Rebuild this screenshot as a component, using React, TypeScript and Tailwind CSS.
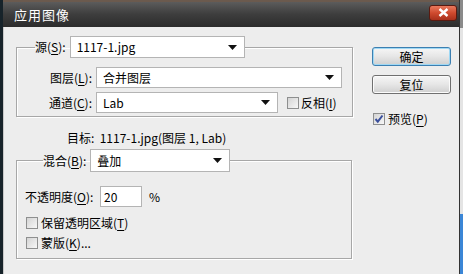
import { ReactNode } from "react";

const FONT = { fontFamily: '"Noto Sans CJK SC", "Liberation Sans", sans-serif' };

const Key = ({ children }: { children: ReactNode }) => (
  <span className="underline underline-offset-2">{children}</span>
);

const Select = ({ value, className }: { value: string; className: string }) => (
  <div
    className={`flex items-center justify-between bg-white border border-[#b4b4b4] pl-[6px] pr-[7px] text-[12px] text-black ${className}`}
  >
    <span>{value}</span>
    <svg width="9" height="5" viewBox="0 0 9 5">
      <path d="M0 0h9L4.5 5z" fill="#111" />
    </svg>
  </div>
);

const Check = ({ checked = false }: { checked?: boolean }) => (
  <span className="relative w-[12px] h-[12px] shrink-0 border border-[#8e8f8f] bg-gradient-to-br from-[#d4d4d4] to-[#f7f7f7]">
    {checked && (
      <svg className="absolute left-0 top-0" width="10" height="10" viewBox="0 0 10 10">
        <path d="M1.5 5l2.3 2.6L8.5 1.5" stroke="#3a4f9c" strokeWidth="2" fill="none" />
      </svg>
    )}
  </span>
);

const Button = ({ label, primary = false }: { label: string; primary?: boolean }) => (
  <button
    className={`w-[79px] h-[19px] rounded-[3px] border text-[12px] leading-none text-black bg-gradient-to-b from-[#f6f6f6] via-[#e6e6e6] to-[#cfcfcf] ${
      primary ? "border-[#3c7fb1] shadow-[inset_0_0_0_1px_#9fd8f4]" : "border-[#707070] shadow-[inset_0_0_0_1px_#fbfbfb]"
    }`}
  >
    {label}
  </button>
);

export default function App() {
  return (
    <div className="w-[463px] h-[274px] flex bg-[#dcdcdc] overflow-hidden" style={FONT}>
      <div className="w-[460px] h-full flex flex-col border-l-[3px] border-[#17232a] border-r border-r-[#333]">
        {/* title bar */}
        <div className="h-[27px] shrink-0 flex items-center justify-between pl-[11px] pr-[2px] bg-gradient-to-b from-[#5c5c5c] via-[#3d3d3d] to-[#2c2c2c] border-t-[2px] border-[#6b5a4e]">
          <span className="text-white text-[13px] tracking-[1px]">应用图像</span>
          <span className="w-[28px] h-[16px] mb-[4px] flex items-center justify-center rounded-[3px] border border-[#5a1a10] bg-gradient-to-b from-[#e8785c] via-[#cf4a2e] to-[#a8301b]">
            <svg width="11" height="9" viewBox="0 0 11 9">
              <path d="M1.5 1l8 7M9.5 1l-8 7" stroke="#fff" strokeWidth="2.4" />
            </svg>
          </span>
        </div>

        {/* body */}
        <div className="flex-1 flex bg-[#ededed] border-l border-[#c8c8c8] pl-[12px] text-[12px] text-black">
          <div className="w-[337px] flex flex-col pt-[9px]">
            <fieldset className="border border-[#a7a7a7] shadow-[inset_1px_1px_0_#fff,1px_1px_0_#fff] pt-[9px] pb-[3px]">
              <legend className="ml-[18px] flex items-center gap-[4px] h-[22px]">
                <span>
                  源(<Key>S</Key>):
                </span>
                <Select value="1117-1.jpg" className="w-[175px] h-[22px]" />
              </legend>
              <div className="flex flex-col gap-[4px]">
                <div className="flex items-center">
                  <span className="w-[79px] text-right pr-[4px]">
                    图层(<Key>L</Key>):
                  </span>
                  <Select value="合并图层" className="w-[246px] h-[21px]" />
                </div>
                <div className="flex items-center">
                  <span className="w-[79px] text-right pr-[4px]">
                    通道(<Key>C</Key>):
                  </span>
                  <Select value="Lab" className="w-[182px] h-[21px]" />
                  <span className="flex items-center gap-[2px] ml-[9px]">
                    <Check />
                    <span>
                      反相(<Key>I</Key>)
                    </span>
                  </span>
                </div>
              </div>
            </fieldset>

            <div className="h-[32px] flex items-center pl-[51px] pt-[10px]">目标:&nbsp;&nbsp;1117-1.jpg(图层 1, Lab)</div>

            <fieldset className="w-[336px] border border-[#a7a7a7] shadow-[inset_1px_1px_0_#fff,1px_1px_0_#fff] pt-[14px] pb-[8px] pl-[8px]">
              <legend className="ml-[18px] flex items-center gap-[4px] h-[23px]">
                <span>
                  混合(<Key>B</Key>):
                </span>
                <Select value="叠加" className="w-[140px] h-[23px]" />
              </legend>
              <div className="flex items-center h-[21px]">
                <span className="w-[75px]">
                  不透明度(<Key>O</Key>):
                </span>
                <div className="w-[42px] h-[21px] bg-white border border-[#b4b4b4] pl-[3px] flex items-center">20</div>
                <span className="ml-[7px]">%</span>
              </div>
              <div className="flex items-center gap-[3px] mt-[9px] pl-[1px] h-[14px]">
                <Check />
                <span>
                  保留透明区域(<Key>T</Key>)
                </span>
              </div>
              <div className="flex items-center gap-[3px] mt-[6px] pl-[1px] h-[14px]">
                <Check />
                <span>
                  蒙版(<Key>K</Key>)...
                </span>
              </div>
            </fieldset>
          </div>

          <div className="flex flex-col pl-[19px] pt-[20px]">
            <Button label="确定" primary />
            <div className="mt-[9px]">
              <Button label="复位" />
            </div>
            <div className="flex items-center gap-[3px] mt-[16px] pl-[1px]">
              <Check checked />
              <span>
                预览(<Key>P</Key>)
              </span>
            </div>
          </div>
        </div>
      </div>
      <div className="flex-1 flex flex-col bg-[#e4e4e4]">
        <div className="h-[28px] bg-[#8a8a8a]" />
        <div className="mt-[186px] flex-1 bg-[#3b86d6]" />
      </div>
    </div>
  );
}
